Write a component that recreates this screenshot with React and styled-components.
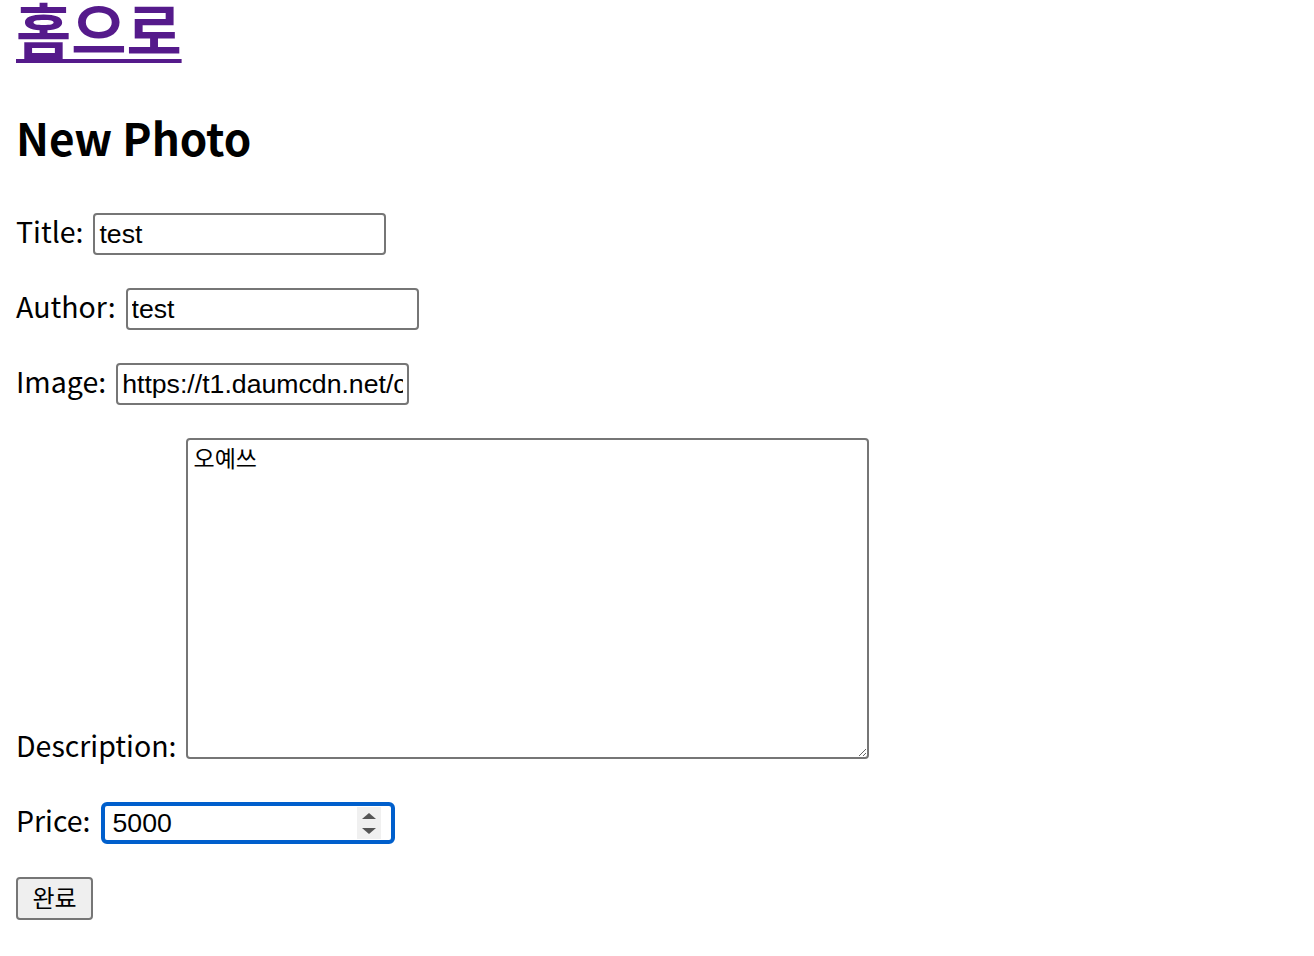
import React from "react";
import styled, { createGlobalStyle } from "styled-components";

const GlobalStyle = createGlobalStyle`
  html, body { margin: 0; padding: 0; background: #ffffff; }
  body { font-family: "Noto Sans CJK KR", "Noto Sans", sans-serif; color: #000; }
`;

const Page = styled.div`
  padding: 0 16px;
  display: flex;
  flex-direction: column;
  align-items: flex-start;
`;

const HomeHeading = styled.h1`
  margin: 0;
  font-size: 60px;
  line-height: 56px;
  font-weight: 700;
`;

const HomeLink = styled.a`
  color: #551a8b;
  text-decoration: underline;
  text-decoration-thickness: 4px;
  text-underline-offset: 5px;
`;

const PageTitle = styled.h2`
  margin: 53px 0 48px;
  font-size: 44px;
  line-height: 56px;
  font-weight: 700;
`;

const Form = styled.form`
  display: flex;
  flex-direction: column;
  align-items: flex-start;
  gap: 33px;
`;

const Field = styled.div`
  display: flex;
  align-items: ${(p) => (p.$bottom ? "flex-end" : "baseline")};
  gap: 10px;
  margin-bottom: ${(p) => (p.$bottom ? "10px" : "0")};
`;

const Label = styled.label`
  font-size: 28.5px;
  line-height: 28px;
  white-space: nowrap;
`;

const TextInput = styled.input`
  box-sizing: border-box;
  width: 293px;
  height: 42px;
  margin: 0;
  padding: 2px 4px;
  border: 2px solid #767676;
  border-radius: 4px;
  font-family: "Liberation Sans", Arial, sans-serif;
  font-size: 26.67px;
  color: #000;
  background: #fff;
  outline: none;
`;

const TextArea = styled.textarea`
  box-sizing: border-box;
  width: 683px;
  height: 321px;
  margin: 0;
  padding: 4px 5px;
  border: 2px solid #767676;
  border-radius: 4px;
  font-family: "Noto Sans CJK KR", sans-serif;
  font-size: 23px;
  line-height: 26px;
  color: #000;
  background: #fff;
  outline: none;
`;

const NumberBox = styled.div`
  box-sizing: border-box;
  width: 294px;
  height: 42px;
  display: flex;
  align-items: center;
  padding: 0 10px 0 4px;
  border: 4px solid #005fcc;
  border-radius: 6px;
  background: #fff;
`;

const NumberInput = styled.input`
  flex: 1;
  min-width: 0;
  margin: 0;
  padding: 0 4px;
  border: none;
  outline: none;
  background: transparent;
  font-family: "Liberation Sans", Arial, sans-serif;
  font-size: 26.67px;
  color: #000;
`;

const Spinner = styled.svg`
  flex: none;
  display: block;
`;

const SubmitButton = styled.button`
  box-sizing: border-box;
  width: 77px;
  height: 43px;
  margin: 0;
  padding: 0 0 4px;
  border: 2px solid #767676;
  border-radius: 4px;
  background: #efefef;
  font-family: "Noto Sans CJK KR", sans-serif;
  font-size: 24px;
  line-height: 30px;
  color: #000;
`;

export default function App() {
  return (
    <>
      <GlobalStyle />
      <Page>
        <HomeHeading>
          <HomeLink href="#">홈으로</HomeLink>
        </HomeHeading>
        <PageTitle>New Photo</PageTitle>
        <Form onSubmit={(e) => e.preventDefault()}>
          <Field>
            <Label htmlFor="title">Title:</Label>
            <TextInput id="title" type="text" defaultValue="test" />
          </Field>
          <Field>
            <Label htmlFor="author">Author:</Label>
            <TextInput id="author" type="text" defaultValue="test" />
          </Field>
          <Field>
            <Label htmlFor="image">Image:</Label>
            <TextInput id="image" type="text" defaultValue="https://t1.daumcdn.net/cfile/tistory/photo.jpg" />
          </Field>
          <Field $bottom>
            <Label htmlFor="desc">Description:</Label>
            <TextArea id="desc" defaultValue="오예쓰" />
          </Field>
          <Field>
            <Label htmlFor="price">Price:</Label>
            <NumberBox>
              <NumberInput id="price" type="text" inputMode="numeric" defaultValue="5000" />
              <Spinner width="24" height="32" viewBox="0 0 24 32" aria-hidden="true">
                <rect x="0" y="0" width="24" height="32" fill="#f0f0f0" />
                <polygon points="12,6 19,12 5,12" fill="#555555" />
                <polygon points="5,21 19,21 12,27" fill="#555555" />
              </Spinner>
            </NumberBox>
          </Field>
          <SubmitButton type="submit">완료</SubmitButton>
        </Form>
      </Page>
    </>
  );
}
